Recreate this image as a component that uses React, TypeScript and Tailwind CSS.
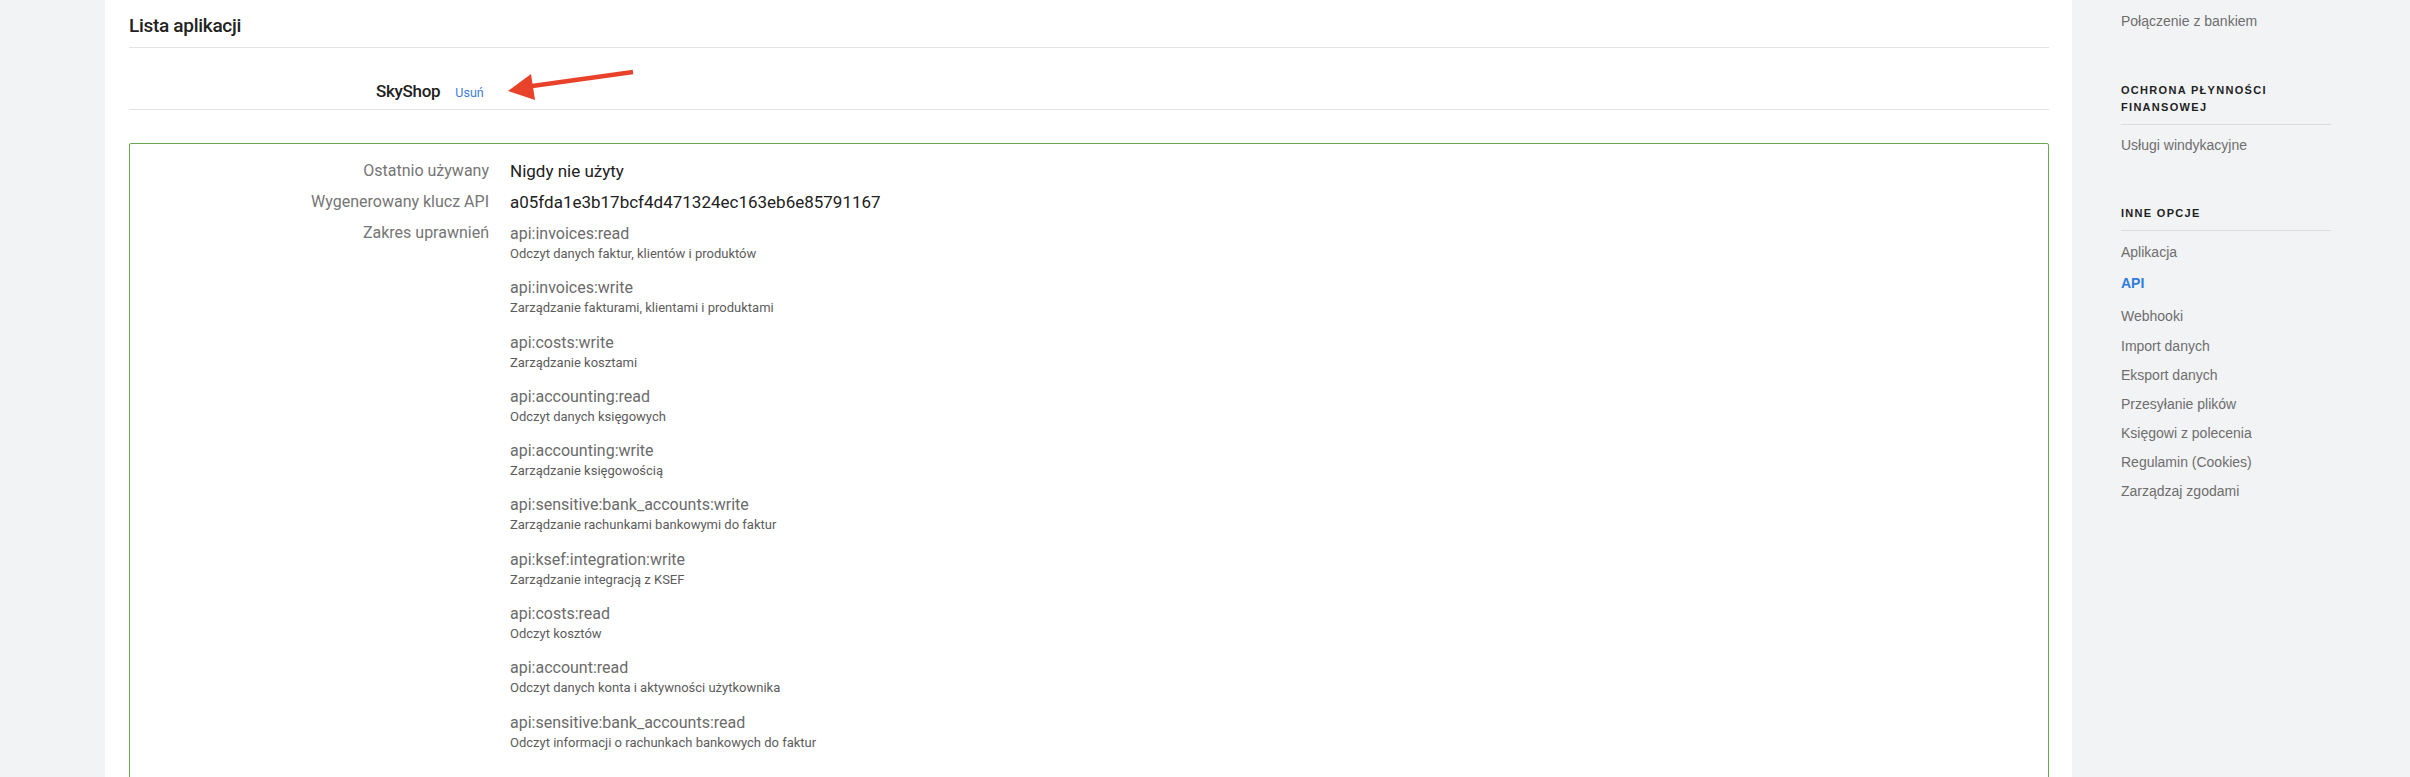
import React from "react";

const perms: [string, string][] = [
  ["api:invoices:read", "Odczyt danych faktur, klientów i produktów"],
  ["api:invoices:write", "Zarządzanie fakturami, klientami i produktami"],
  ["api:costs:write", "Zarządzanie kosztami"],
  ["api:accounting:read", "Odczyt danych księgowych"],
  ["api:accounting:write", "Zarządzanie księgowością"],
  ["api:sensitive:bank_accounts:write", "Zarządzanie rachunkami bankowymi do faktur"],
  ["api:ksef:integration:write", "Zarządzanie integracją z KSEF"],
  ["api:costs:read", "Odczyt kosztów"],
  ["api:account:read", "Odczyt danych konta i aktywności użytkownika"],
  ["api:sensitive:bank_accounts:read", "Odczyt informacji o rachunkach bankowych do faktur"],
];

export default function App() {
  return (
    <div className="flex h-[777px] w-[2410px] overflow-hidden bg-[#f2f3f5]">
      <div className="w-[105px] shrink-0" />
      <div className="relative w-[1967px] shrink-0 bg-white pl-[24px] pr-[23px] font-['Roboto',sans-serif]">
        <div className="flex h-[48px] items-start border-b border-[#e3e3e3] pt-[12px]">
          <h1 className="text-[19px] leading-[28px] font-medium tracking-[-0.3px] text-[#222]">Lista aplikacji</h1>
        </div>
        <div className="flex h-[62px] items-start border-b border-[#e3e3e3] pt-[31px] pl-[247px]">
          <span className="text-[17px] leading-[24px] font-medium tracking-[-0.3px] text-[#222]">SkyShop</span>
          <span className="ml-[15px] pt-[2px] text-[12.5px] leading-[24px] text-[#3b7dd8]">Usuń</span>
        </div>
        <div className="mt-[33px] rounded-[2px] border border-[#6aa84f] pt-[15px] pb-[80px]">
          <div className="grid grid-cols-[359px_1fr] gap-x-[21px] gap-y-[7px] leading-[24px]">
            <div className="text-right text-[16px] text-[#757575]">Ostatnio używany</div>
            <div className="text-[17px] text-[#212121]">Nigdy nie użyty</div>
            <div className="text-right text-[16px] text-[#757575]">Wygenerowany klucz API</div>
            <div className="text-[17px] text-[#212121]">a05fda1e3b17bcf4d471324ec163eb6e85791167</div>
            <div className="text-right text-[16px] text-[#757575]">Zakres uprawnień</div>
            <div className="flex flex-col gap-[14.3px] pt-[1px]">
              {perms.map(([t, d]) => (
                <div key={t} className="flex flex-col">
                  <span className="text-[16px] leading-[24px] text-[#6b6b6b]">{t}</span>
                  <span className="text-[13px] leading-[16px] text-[#5c5c5c]">{d}</span>
                </div>
              ))}
            </div>
          </div>
        </div>
        <svg
          className="pointer-events-none absolute left-0 top-0"
          width="600"
          height="120"
          viewBox="0 0 600 120"
        >
          <line x1="528" y1="72" x2="420" y2="87" stroke="#e8432a" strokeWidth="4.5" strokeLinecap="butt" />
          <polygon points="403,91 426,74 430,100" fill="#e8432a" />
        </svg>
      </div>
      <div className="flex-1 pl-[49px] pt-[11px] font-['Liberation_Sans',Arial,sans-serif]">
        <div className="w-[210px]">
          <div className="h-[20px] text-[14px] leading-[20px] text-[#6e6e6e]">Połączenie z bankiem</div>
          <div className="mt-[51px] border-b border-[#dcdcdc] pb-[8px] text-[11px] leading-[17px] font-bold tracking-[1.3px] text-[#1f1f1f]">
            OCHRONA PŁYNNOŚCI
            <br />
            FINANSOWEJ
          </div>
          <div className="mt-[10px] h-[20px] text-[14px] leading-[20px] text-[#6e6e6e]">Usługi windykacyjne</div>
          <div className="mt-[50px] border-b border-[#dcdcdc] pb-[8px] text-[11px] leading-[17px] font-bold tracking-[1.3px] text-[#1f1f1f]">
            INNE OPCJE
          </div>
          <div className="mt-[7px] flex flex-col text-[14px] text-[#6e6e6e]">
            <span className="h-[29px] leading-[29px]">Aplikacja</span>
            <span className="h-[33px] leading-[33px] font-bold text-[#2f7be0]">API</span>
            <span className="h-[32px] leading-[32px]">Webhooki</span>
            <span className="h-[29px] leading-[29px]">Import danych</span>
            <span className="h-[29px] leading-[29px]">Eksport danych</span>
            <span className="h-[29px] leading-[29px]">Przesyłanie plików</span>
            <span className="h-[29px] leading-[29px]">Księgowi z polecenia</span>
            <span className="h-[29px] leading-[29px]">Regulamin (Cookies)</span>
            <span className="h-[29px] leading-[29px]">Zarządzaj zgodami</span>
          </div>
        </div>
      </div>
    </div>
  );
}
